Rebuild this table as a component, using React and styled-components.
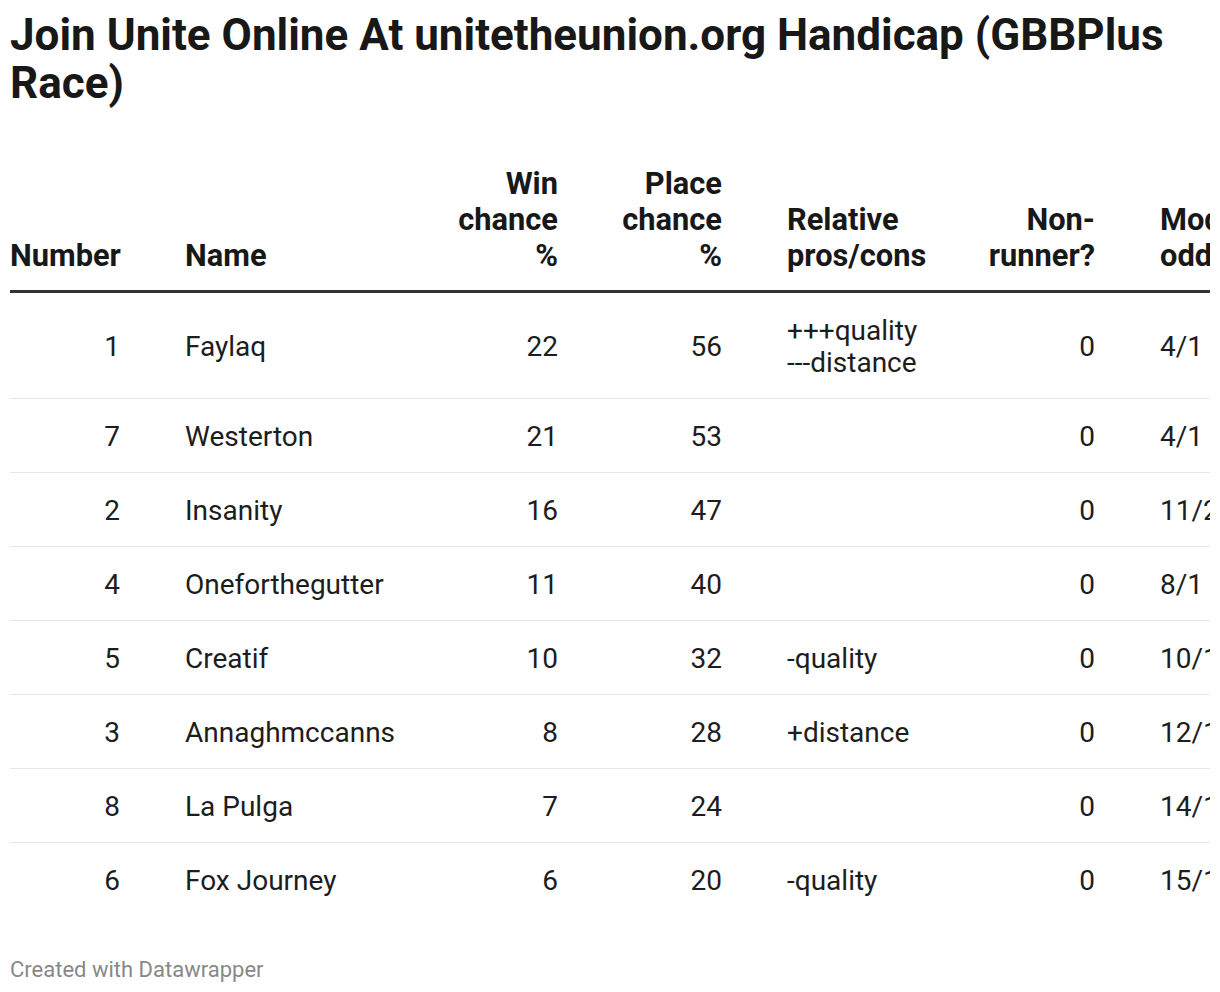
import React from "react";
import styled, { createGlobalStyle } from "styled-components";

const Global = createGlobalStyle`
  html, body { margin: 0; padding: 0; background: #fff; }
  body { font-family: Roboto, "Noto Sans", sans-serif; color: #1d1d1d; }
`;

const Page = styled.div`
  padding: 11px 10px 0 10px;
  width: 1200px;
`;

const Title = styled.h1`
  margin: 0;
  font-size: 44px;
  line-height: 48px;
  font-weight: 700;
  color: #181818;
`;

const Scroller = styled.div`
  margin-top: 59px;
  width: 1200px;
  overflow: hidden;
`;

const Table = styled.table`
  border-collapse: collapse;
  table-layout: fixed;
  width: 1282px;
`;

const Th = styled.th`
  font-size: 30.8px;
  line-height: 36px;
  font-weight: 700;
  color: #181818;
  vertical-align: bottom;
  text-align: ${(p) => (p.$right ? "right" : "left")};
  padding: 0 32px 16px ${(p) => (p.$first ? "0" : p.$right ? "12px" : "33px")};
  border-bottom: 3px solid #333;
`;

const Row = styled.tr`
  border-bottom: ${(p) => (p.$last ? "none" : "1px solid #e6e6e6")};
`;

const Td = styled.td`
  font-size: 28px;
  line-height: 32px;
  font-weight: 400;
  color: #1d1d1d;
  vertical-align: middle;
  white-space: nowrap;
  text-align: ${(p) => (p.$right ? "right" : "left")};
  padding: 22px 32px 19px ${(p) => (p.$first ? "0" : p.$right ? "12px" : "33px")};
`;

const Footer = styled.div`
  margin-top: 42px;
  font-size: 22px;
  line-height: 24px;
  color: #888;
`;

const cols = [
  { key: "num", label: ["Number"], w: 142, right: true },
  { key: "name", label: ["Name"], w: 268 },
  { key: "win", label: ["Win", "chance", "%"], w: 170, right: true },
  { key: "place", label: ["Place", "chance", "%"], w: 164, right: true },
  { key: "rel", label: ["Relative", "pros/cons"], w: 210 },
  { key: "nr", label: ["Non-", "runner?"], w: 163, right: true },
  { key: "odds", label: ["Mod", "odds"], w: 165 },
];

const rows = [
  { num: 1, name: "Faylaq", win: 22, place: 56, rel: ["+++quality", "---distance"], nr: 0, odds: "4/1" },
  { num: 7, name: "Westerton", win: 21, place: 53, rel: [], nr: 0, odds: "4/1" },
  { num: 2, name: "Insanity", win: 16, place: 47, rel: [], nr: 0, odds: "11/2" },
  { num: 4, name: "Oneforthegutter", win: 11, place: 40, rel: [], nr: 0, odds: "8/1" },
  { num: 5, name: "Creatif", win: 10, place: 32, rel: ["-quality"], nr: 0, odds: "10/1" },
  { num: 3, name: "Annaghmccanns", win: 8, place: 28, rel: ["+distance"], nr: 0, odds: "12/1" },
  { num: 8, name: "La Pulga", win: 7, place: 24, rel: [], nr: 0, odds: "14/1" },
  { num: 6, name: "Fox Journey", win: 6, place: 20, rel: ["-quality"], nr: 0, odds: "15/1" },
];

const Lines = ({ items }) =>
  items.map((t, i) => (
    <React.Fragment key={i}>
      {i > 0 && <br />}
      {t}
    </React.Fragment>
  ));

export default function App() {
  return (
    <>
      <Global />
      <Page>
        <Title>Join Unite Online At unitetheunion.org Handicap (GBBPlus Race)</Title>
        <Scroller>
          <Table>
            <colgroup>
              {cols.map((c) => (
                <col key={c.key} style={{ width: c.w }} />
              ))}
            </colgroup>
            <thead>
              <tr>
                {cols.map((c, i) => (
                  <Th key={c.key} $right={c.right} $first={i === 0}>
                    <Lines items={c.label} />
                  </Th>
                ))}
              </tr>
            </thead>
            <tbody>
              {rows.map((r, ri) => (
                <Row key={r.num} $last={ri === rows.length - 1}>
                  {cols.map((c, i) => (
                    <Td key={c.key} $right={c.right} $first={i === 0}>
                      {c.key === "rel" ? <Lines items={r.rel} /> : r[c.key]}
                    </Td>
                  ))}
                </Row>
              ))}
            </tbody>
          </Table>
        </Scroller>
        <Footer>Created with Datawrapper</Footer>
      </Page>
    </>
  );
}
